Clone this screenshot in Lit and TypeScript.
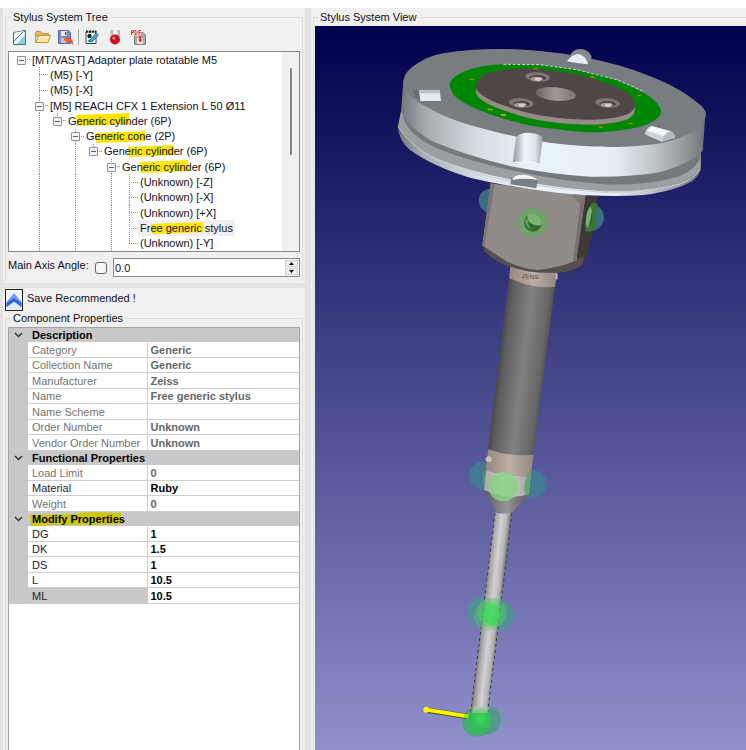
import { LitElement, html, svg, css, nothing } from "lit";
import { customElement, property } from "lit/decorators.js";
import { classMap } from "lit/directives/class-map.js";
import { styleMap } from "lit/directives/style-map.js";

type Point = [number, number];

/** Smooth path through a list of points. */
function curve(points: Point[], closed = true): string {
  const n = points.length;
  const at = (i: number): Point =>
    closed ? points[(i + n) % n] : points[Math.max(0, Math.min(n - 1, i))];
  let d = `M${points[0][0]} ${points[0][1]}`;
  const last = closed ? n : n - 1;
  for (let i = 0; i < last; i++) {
    const [p0, p1, p2, p3] = [at(i - 1), at(i), at(i + 1), at(i + 2)];
    const c1x = p1[0] + (p2[0] - p0[0]) / 6;
    const c1y = p1[1] + (p2[1] - p0[1]) / 6;
    const c2x = p2[0] - (p3[0] - p1[0]) / 6;
    const c2y = p2[1] - (p3[1] - p1[1]) / 6;
    d += `C${c1x} ${c1y} ${c2x} ${c2y} ${p2[0]} ${p2[1]}`;
  }
  return closed ? d + "Z" : d;
}

interface Marker { x: number; w: number; y0: number; y1: number }
interface Node {
  label: string;
  depth: number;
  /** Depths whose vertical guide runs through the whole row. */
  through: number[];
  open?: boolean;
  selected?: boolean;
  marker?: Marker;
}

const NODES: Node[] = [
  { label: "[MT/VAST] Adapter plate rotatable M5", depth: 0, through: [], open: true },
  { label: "(M5) [-Y]", depth: 1, through: [1] },
  { label: "(M5) [-X]", depth: 1, through: [1] },
  { label: "[M5] REACH CFX 1 Extension L 50 Ø11", depth: 1, through: [1], open: true },
  { label: "Generic cylinder (6P)", depth: 2, through: [1], open: true, marker: { x: 10, w: 54, y0: 0, y1: 12 } },
  { label: "Generic cone (2P)", depth: 3, through: [1, 3], open: true, marker: { x: 11, w: 51, y0: 2, y1: 13 } },
  { label: "Generic cylinder (6P)", depth: 4, through: [1, 3], open: true, marker: { x: 26, w: 47, y0: 1, y1: 12 } },
  { label: "Generic cylinder (6P)", depth: 5, through: [1, 3, 5], open: true, marker: { x: 20, w: 49, y0: 1, y1: 13 } },
  { label: "(Unknown) [-Z]", depth: 6, through: [1, 3, 5, 6] },
  { label: "(Unknown) [-X]", depth: 6, through: [1, 3, 5, 6] },
  { label: "(Unknown) [+X]", depth: 6, through: [1, 3, 5, 6] },
  { label: "Free generic stylus", depth: 6, through: [1, 3, 5, 6], selected: true, marker: { x: 13, w: 53, y0: 2, y1: 13 } },
  { label: "(Unknown) [-Y]", depth: 6, through: [1, 3, 5] },
];

interface Prop { name: string; value: string; editable?: boolean; current?: boolean }
interface Section { title: string; marked?: boolean; rows: Prop[] }

const SECTIONS: Section[] = [
  {
    title: "Description",
    rows: [
      { name: "Category", value: "Generic" },
      { name: "Collection Name", value: "Generic" },
      { name: "Manufacturer", value: "Zeiss" },
      { name: "Name", value: "Free generic stylus" },
      { name: "Name Scheme", value: "" },
      { name: "Order Number", value: "Unknown" },
      { name: "Vendor Order Number", value: "Unknown" },
    ],
  },
  {
    title: "Functional Properties",
    rows: [
      { name: "Load Limit", value: "0" },
      { name: "Material", value: "Ruby", editable: true },
      { name: "Weight", value: "0" },
    ],
  },
  {
    title: "Modify Properties",
    marked: true,
    rows: [
      { name: "DG", value: "1", editable: true },
      { name: "DK", value: "1.5", editable: true },
      { name: "DS", value: "1", editable: true },
      { name: "L", value: "10.5", editable: true },
      { name: "ML", value: "10.5", editable: true, current: true },
    ],
  },
];

const reset = css`
  * { box-sizing: border-box; }
  button { padding: 0; border: 0; background: none; font: inherit; color: inherit; display: block; }
  svg { display: block; }
`;

@customElement("tool-bar")
export class ToolBar extends LitElement {
  static styles = [reset, css`
    :host { display: flex; align-items: center; gap: 7px; height: 18px; }
    .rule { width: 1px; height: 16px; background: #a8a8a8; margin: 0 -2px 0 -3px; }
  `];

  private tool(name: string, art: unknown) {
    return html`<button type="button" title=${name} aria-label=${name}>
      <svg width="16" height="16" viewBox="0 0 16 16">${art}</svg>
    </button>`;
  }

  render() {
    return html`
      ${this.tool("New", svg`
        <path d="M1.5 3.5 13.5 1.5V15.5H1.5Z" fill="#e4f6fa" stroke="#3d7887"/>
        <path d="M2 4 11 2 3 11Z" fill="#f7feff"/>
        <path d="M5 15 13 6V15Z" fill="#8fd0e4"/>
        <path d="M2 12 11 3" stroke="#4b6f7d" fill="none"/>
        <path d="M10 1 14 1 14 4Z" fill="#3d8a7c"/>`)}
      ${this.tool("Open", svg`
        <path d="M.5 3.5 1.5 2.5H5.5L7 4.5H13.5V7H.5Z" fill="#e9b95a" stroke="#c48b2d"/>
        <path d="M.5 13V6M.5 13.5H13L15.5 6.5H4L1 13.5Z" fill="#fbe5a0" stroke="#c89334"/>
        <path d="M4.5 7.5H14L13.5 9H4Z" fill="#fff6d2"/>`)}
      ${this.tool("Save and revert", svg`
        <path d="M.5 1.5H10L12.5 3.5V14.5H.5Z" fill="#7d8abf" stroke="#5b669a"/>
        <path d="M3 2H9V7H3Z" fill="#e3e7f2"/><path d="M7 3H8.500V6H7Z" fill="#4a558a"/>
        <path d="M3 9H10V14H3Z" fill="#c3c9dc"/>
        <path d="M6 10.500 9.500 7V9.200C13 9 15.500 11 14.500 15.500C13.500 13 12 12 9.500 12.200V14Z" fill="#ff5a2a" stroke="#d83a12" stroke-width=".5"/>`)}
      <span class="rule"></span>
      ${this.tool("Edit", svg`
        <path d="M2 3H12V14.500H2Z" fill="#fbfbfb" stroke="#2c4a50"/>
        <path d="M2 2.500H12.500" stroke="#222" stroke-width="2" stroke-dasharray="2 1"/>
        <circle cx="5.500" cy="7" r="2.200" fill="#1a2c2c"/>
        <path d="M3.500 12.500C5 9 8 10 9 13Z" fill="#2b9b62"/>
        <path d="M6 11 12 4 14.500 6 8.500 12.500 5.500 13Z" fill="#4ca7df" stroke="#1c5c8c" stroke-width=".8"/>`)}
      ${this.tool("Stylus", svg`
        <path d="M4.500 1V8M11.500 1V8" stroke="#9a9a9a" stroke-width="2.400"/>
        <path d="M4 1V8M11 1V8" stroke="#e6e6e6"/>
        <circle cx="8" cy="10.500" r="5" fill="#c8101e"/>
        <circle cx="6.800" cy="9" r="1.600" fill="#ff7d80"/>`)}
      ${this.tool("PDF", svg`
        <path d="M4.500 3.500H13L15.500 6V15.500H4.500Z" fill="#a9a9a9" stroke="#858585"/>
        <path d="M0 .5H11V6.500H0Z" fill="#fff3f3"/>
        <path d="M1.500 6V1.500H3.500V3.500H1.500M5 1.500V5.500H6.500L7 4.500V2.500L6 1.500H5M9 6V1.500H11M9 3.500H10.500" fill="none" stroke="#e02020"/>
        <path d="M7 9H13V15H7Z" fill="#e8e8e8"/>
        <path d="M9.500 7H11V10.500H12.500L10.200 13.500 8 10.500H9.500Z" fill="#d61e1e"/>`)}
    `;
  }
}

@customElement("stylus-tree")
export class StylusTree extends LitElement {
  static styles = [reset, css`
    :host { display: flex; border: 1px solid #828790; background: #fff; height: 201px; }
    .rows { flex: 1; min-width: 0; display: grid; grid-auto-rows: 1fr; padding-left: 3px; overflow: hidden; }
    .row { display: flex; min-width: 0; white-space: nowrap; }
    .cell { width: 18px; flex: none; position: relative; background-repeat: no-repeat;
      --dots: repeating-linear-gradient(#8d8d8d 0 1px, transparent 1px 2px);
      --dash: repeating-linear-gradient(90deg, #8d8d8d 0 1px, transparent 1px 2px); }
    .full { background: var(--dots) 9px 0 / 1px 100% no-repeat; }
    .tee { background: var(--dots) 9px 0 / 1px 100% no-repeat, var(--dash) 9px 50% / 9px 1px no-repeat; }
    .end { background: var(--dots) 9px 0 / 1px 50% no-repeat, var(--dash) 9px 50% / 9px 1px no-repeat; }
    .root { background: var(--dash) 9px 50% / 9px 1px no-repeat; }
    .toggle { position: absolute; left: 5px; top: calc(50% - 4px); width: 9px; height: 9px; border: 1px solid #919191;
      border-radius: 1px; background: linear-gradient(#4b63a7, #4b63a7) center / 5px 1px no-repeat, #f3f3f3; }
    .label { position: relative; display: flex; align-items: center; padding: 0 2px; z-index: 0; }
    .selected { background: #f0f0f0; }
    .marker { position: absolute; top: 0; z-index: -1; overflow: visible; fill: #ffe600; }
    .scroll { width: 17px; background: #f0f0f0; display: flex; justify-content: center; }
    .thumb { width: 2px; height: 87px; margin-top: 16px; background: #858585; border-radius: 1px; }
  `];

  private cells(node: Node) {
    const out = [];
    for (let i = 0; i <= node.depth; i++) {
      const own = i === node.depth;
      const on = node.through.includes(i);
      out.push(html`<span class=${classMap({
        cell: true,
        root: own && i === 0,
        tee: own && on,
        end: own && !on && i > 0,
        full: !own && on,
      })}>${own && node.open
        ? html`<button class="toggle" type="button" aria-label=${"Collapse " + node.label}></button>`
        : nothing}</span>`);
    }
    return out;
  }

  private stroke(m: Marker) {
    return html`<svg class="marker" style=${styleMap({ left: m.x + "px" })} width=${m.w} height="15" aria-hidden="true">
      ${svg`<path d="M0 ${m.y0 + 2}L${m.w * 0.5} ${m.y0 + 1}L${m.w - 1} ${m.y0}L${m.w} ${m.y1 - 1}L${m.w * 0.6} ${m.y1}L1 ${m.y1 + 1}Z"/>`}
    </svg>`;
  }

  render() {
    return html`
      <div class="rows" role="tree" aria-label="Stylus System Tree">
        ${NODES.map((n) => html`
          <div class="row" role="treeitem" aria-level=${n.depth + 1}>
            ${this.cells(n)}
            <span class=${classMap({ label: true, selected: !!n.selected })}>
              ${n.marker ? this.stroke(n.marker) : nothing}${n.label}
            </span>
          </div>`)}
      </div>
      <div class="scroll"><span class="thumb"></span></div>
    `;
  }
}

@customElement("property-grid")
export class PropertyGrid extends LitElement {
  static styles = [reset, css`
    :host { display: block; border: 1px solid #a3a3a3; background: #fff; font: 11px/14px "Liberation Sans", Arial, sans-serif; }
    table { width: 100%; height: 276px; border-collapse: collapse; table-layout: fixed; }
    .gutter { width: 19px; }
    .names { width: 119px; }
    th, td { padding: 0; text-align: left; white-space: nowrap; overflow: hidden; }
    .chev-cell, .fill { background: #c8c8c8; }
    .title { background: #c8c8c8; font-weight: 700; padding-left: 4px; color: #000; }
    .titlebox { position: relative; z-index: 0; }
    .marker { position: absolute; left: -2px; top: -1px; z-index: -1; fill: #d0c800; overflow: visible; }
    .name { font-weight: 400; padding-left: 4px; color: #747474;
      border-bottom: 1px solid #cdcdcd; border-right: 1px solid #cdcdcd; }
    .value { font-weight: 700; padding-left: 3px; color: #666; border-bottom: 1px solid #cdcdcd; }
    .editable .name { color: #1c1c2c; }
    .editable .value { color: #000; }
    .current .name { background: #c8c8c8; }
    .chev { width: 19px; height: 14px; display: flex; align-items: center; justify-content: center; }
    .chev svg { fill: none; stroke: #333; stroke-width: 1.500; }
  `];

  render() {
    return html`
      <table aria-label="Component Properties">
        <colgroup><col class="gutter"><col class="names"><col></colgroup>
        ${SECTIONS.map((s) => html`
          <tbody>
            <tr>
              <td class="chev-cell"><button class="chev" type="button" aria-label=${"Collapse " + s.title}>
                <svg width="9" height="6" viewBox="0 0 9 6"><path d="M1 1 4.500 4.500 8 1"/></svg>
              </button></td>
              <th class="title" colspan="2" scope="rowgroup"><span class="titlebox">
                ${s.marked ? html`<svg class="marker" width="93" height="15" aria-hidden="true">
                  <path d="M0 3 40 2 62 0 91 1 93 12 60 13 20 13 1 15Z"/></svg>` : nothing}${s.title}
              </span></th>
            </tr>
            ${s.rows.map((r) => html`
              <tr class=${classMap({ editable: !!r.editable, current: !!r.current })}>
                <td class="fill"></td>
                <th class="name" scope="row">${r.name}</th>
                <td class="value">${r.value}</td>
              </tr>`)}
          </tbody>`)}
      </table>
    `;
  }
}

const PLATE_TOP: Point[] = [
  [40, 160], [52, 125], [100, 90], [160, 70], [250, 59], [350, 57], [450, 63], [560, 78], [700, 110], [830, 160],
  [915, 212], [946, 245], [938, 278], [900, 310], [820, 338], [700, 350], [600, 349], [480, 338], [360, 316], [200, 272], [100, 225], [50, 187],
];
const GREEN: Point[] = [
  [180, 170], [192, 143], [250, 115], [340, 103], [450, 105], [560, 120], [680, 150], [775, 197], [812, 238], [800, 266],
  [745, 291], [640, 306], [540, 302], [400, 282], [280, 245], [205, 207],
];
const CORE: Point[] = [
  [258, 172], [275, 140], [330, 121], [420, 116], [540, 130], [650, 160], [718, 193], [734, 225], [715, 251], [650, 266],
  [560, 268], [440, 254], [340, 226], [280, 198],
];
const CORE_SIDE: Point[] = CORE.map(([x, y]) => [x, y + 15]);
const SCREWS: Point[] = [[443, 141], [394, 219], [653, 219]];
const PADS: Point[] = [[246, 148], [437, 115], [608, 141], [747, 196], [722, 280], [633, 291], [340, 254], [300, 238]];

@customElement("stylus-view")
export class StylusView extends LitElement {
  static styles = [reset, css`
    :host { display: block; background: linear-gradient(#00004c, #9090cc); }
    svg { width: 100%; height: auto; }
    .mark { font: 14px "Liberation Sans", sans-serif; fill: #2e2a28; }
  `];

  render() {
    return html`<svg viewBox="315 26 431 724" role="img" aria-label="Stylus system model">${svg`
      <defs>
        <linearGradient id="rim"><stop offset="0" stop-color="#72777a"/><stop offset=".08" stop-color="#a5abaf"/><stop offset=".25" stop-color="#d6dde2"/><stop offset=".45" stop-color="#e9f3fa"/><stop offset=".7" stop-color="#e6eff5"/><stop offset=".82" stop-color="#c2c9cd"/><stop offset=".93" stop-color="#94999c"/><stop offset="1" stop-color="#6e7376"/></linearGradient>
        <linearGradient id="pin"><stop offset="0" stop-color="#8e9599"/><stop offset=".4" stop-color="#edf5fb"/><stop offset=".75" stop-color="#dde4ea"/><stop offset="1" stop-color="#9aa0a4"/></linearGradient>
        <linearGradient id="hole"><stop offset="0" stop-color="#6b6461"/><stop offset=".5" stop-color="#a09894"/><stop offset="1" stop-color="#7d7673"/></linearGradient>
        <linearGradient id="tube" gradientUnits="userSpaceOnUse" x1="497" y1="370" x2="547" y2="376"><stop offset="0" stop-color="#464646"/><stop offset=".12" stop-color="#5e5e5e"/><stop offset=".5" stop-color="#818181"/><stop offset=".85" stop-color="#666"/><stop offset="1" stop-color="#484848"/></linearGradient>
        <linearGradient id="collar"><stop offset="0" stop-color="#94877f"/><stop offset=".5" stop-color="#bdaea7"/><stop offset="1" stop-color="#93877f"/></linearGradient>
        <linearGradient id="ring"><stop offset="0" stop-color="#a9a9a9"/><stop offset=".5" stop-color="#d4d2d3"/><stop offset="1" stop-color="#a0a0a0"/></linearGradient>
        <linearGradient id="cone"><stop offset="0" stop-color="#5c5c5c"/><stop offset=".5" stop-color="#969492"/><stop offset="1" stop-color="#5a5a5a"/></linearGradient>
        <linearGradient id="stem" gradientUnits="userSpaceOnUse" x1="482" y1="612" x2="500" y2="614"><stop offset="0" stop-color="#777"/><stop offset=".2" stop-color="#a9a9a9"/><stop offset=".5" stop-color="#d2d2d2"/><stop offset=".8" stop-color="#b5b5b5"/><stop offset="1" stop-color="#757575"/></linearGradient>
        <radialGradient id="bright"><stop offset="0" stop-color="#2fe14e"/><stop offset="1" stop-color="#33b65a"/></radialGradient>
      </defs>

      <!-- cube below the plate -->
      <g transform="translate(460 170) scale(.33333)">
        <circle cx="92" cy="92" r="36" fill="#386d80"/>
        <circle cx="391" cy="142" r="41" fill="#386d80"/>
        <path d="M360 75 413 78 400 180 378 265Q368 288 340 298L300 307Z" fill="#3d3937"/>
        <path d="M68 226 74 244Q105 275 150 292Q230 315 310 307Q350 300 365 286L372 262 230 280Z" fill="#55504d"/>
        <path d="M92 40 67 226 138 273Q190 297 232 300Q300 294 349 271L376 78Z" fill="#928c89"/>
        <path d="M92 40 67 226 73 232 104 45Z" fill="#7a7572"/>
        <path d="M361 95 376 78 349 271 339 274Z" fill="#77716f"/>
        <path d="M330 75H378L361 100Z" fill="#7f7976"/>
        <path d="M397 98Q375 120 376 183Q395 190 405 177L412 100Z" fill="#3d7534"/>
        <ellipse cx="387" cy="142" rx="8" ry="31" transform="rotate(8 387 142)" fill="#78b16f"/>
        <path d="M391 114Q399 140 384 170Q394 164 397 140Z" fill="#24542a"/>
        <circle cx="218" cy="158" r="45" fill="#72a36c"/>
        <circle cx="219" cy="158" r="27" fill="#2e6a30"/>
        <path d="M202 134Q222 124 240 140Q248 152 244 165Q230 170 212 160Q200 150 202 134Z" fill="#7bb374"/>
        <path d="M194 150Q194 170 215 180Q203 165 202 143Z" fill="#5d9d58"/>
        <path d="M151 290Q215 312 291 308L285 352Q215 360 147 325Z" fill="url(#collar)"/>
        <path d="M290 310V328" stroke="#cfc8c3" stroke-width="5"/>
      </g>
      <text class="mark" transform="translate(522 278) scale(.4) rotate(4)">ZEISS</text>

      <!-- mounting plate -->
      <g transform="translate(390 30) scale(.33333)">
        <path d="M33 245 24 285Q24 330 60 360Q130 410 240 443Q360 472 500 488Q640 503 760 495Q860 482 908 452Q930 435 933 410V355Z" fill="url(#rim)"/>
        <path d="M33 245 26 285Q60 345 140 385Q240 425 360 448Q500 475 640 484Q780 486 870 458Q915 440 932 415V350Z" fill="#999fa2"/>
        <path d="M24 288Q60 350 140 389Q240 430 360 453Q500 479 640 487Q780 489 870 462Q915 444 931 418" fill="none" stroke="#c9cfd3" stroke-width="3"/>
        <path d="M38 260Q60 325 160 362Q260 400 380 424Q520 455 660 464Q790 464 870 438Q920 415 930 385L932 340 500 330Z" fill="#73797c"/>
        <path d="M40 155 33 245Q55 292 130 335Q240 380 370 410Q480 432 600 440Q710 442 800 428Q890 408 938 362L947 243Z" fill="url(#rim)"/>
        <path d=${curve(PLATE_TOP)} fill="#777d80"/>
        <path d=${curve(GREEN)} fill="#008605"/>
        <path d="M340 103 450 104 560 119 680 149 760 184" fill="none" stroke="#ccd3d5" stroke-width="3" stroke-dasharray="9 5"/>
        <path d=${curve(CORE_SIDE)} fill="#958c88"/>
        <path d=${curve(CORE)} fill="#4f4745"/>
        <ellipse cx="497" cy="192" rx="61" ry="20" transform="rotate(5 497 192)" fill="url(#hole)"/>
        ${SCREWS.map(([x, y]) => svg`
          <ellipse cx=${x} cy=${y} rx="37" ry="14" transform="rotate(5 ${x} ${y})" fill="#7f7875"/>
          <ellipse cx=${x} cy=${y + 3} rx="25" ry="9" fill="#4a4341"/>
          <ellipse cx=${x - 3} cy=${y + 6} rx="19" ry="7" fill="#a29b98"/>
          <path d="M${x - 8} ${y + 2}h18v7l-9 3-9-3Z" fill="#d5d0ce"/>`)}
        ${PADS.map(([x, y], i) => svg`
          <path d="M${x - 9} ${y - 2}h14l4 5h-14Z" fill=${i > 5 ? "#c9c900" : "#7a8a00"}/>
          <path d="M${x - 3} ${y - 1}h6v3h-6Z" fill="#b87a10"/>`)}
        <path d="M541 75Q550 57 570 57Q597 58 605 80L600 98 560 90Z" fill="#858b8f"/>
        <path d="M531 94Q545 72 567 72Q588 78 594 103Q560 100 531 94Z" fill="#e6eff6"/>
        <path d="M68 180 88 180 92 212Q72 200 68 180Z" fill="#686e71"/>
        <path d="M87 181H149L153 213H91Z" fill="#e3eaf0"/>
        <path d="M87 181H149L150 190H88Z" fill="#bac1c6"/>
        <path d="M764 313Q768 294 784 288L842 304Q855 312 855 322L815 335Z" fill="#cdd4d9"/>
        <path d="M784 288 842 304 822 318 772 302Z" fill="#f0f6fa"/>
        <path d="M815 335Q822 306 842 304Q855 310 855 324Z" fill="#b3babf"/>
        <path d="M378 325Q382 308 418 308Q455 311 458 325L448 405Q410 394 368 401Z" fill="url(#pin)"/>
        <path d="M368 401Q380 393 392 400Q420 390 448 404" fill="none" stroke="#f4faff" stroke-width="4"/>
        <path d="M361 463 364 445Q378 434 400 434Q432 436 443 450L439 475Z" fill="#787e82"/>
        <path d="M368 444Q378 434 400 434Q432 436 443 450Q405 442 368 450Z" fill="#eef5fb"/>
      </g>

      <!-- extension tube and stem -->
      <path d="M509 278Q530 289 555 287L533 455Q510 459 488 449Z" fill="url(#tube)"/>
      <g transform="translate(440 430) scale(.33333)">
        <circle cx="128" cy="137" r="42" fill="#3f7f90" opacity=".85"/>
        <circle cx="278" cy="163" r="42" fill="#3f7f90" opacity=".85"/>
        <path d="M145 58Q210 82 281 74L272 138Q200 142 137 121Z" fill="url(#collar)"/>
        <circle cx="146" cy="88" r="9" fill="#cbbfb8"/>
        <path d="M138 121Q200 142 272 138L267 193Q210 214 132 180Z" fill="url(#ring)"/>
        <path d="M132 180Q210 214 268 192L216 248Q190 254 167 244Z" fill="url(#cone)"/>
        <path d="M137 118Q122 142 132 180Z" fill="#4f9a5f"/>
        <path d="M272 120Q246 150 256 200L266 194Z" fill="#55a560" opacity=".8"/>
        <circle cx="190" cy="170" r="44" fill="#85d483" opacity=".8"/>
      </g>
      <g transform="translate(410 570) scale(.33333)">
        <circle cx="217" cy="125" r="44" fill="#4c9590" opacity=".8"/>
        <circle cx="270" cy="135" r="44" fill="#4c9590" opacity=".8"/>
        <circle cx="202" cy="455" r="45" fill="#43a56f" opacity=".9"/>
        <circle cx="230" cy="450" r="43" fill="#4d9b86" opacity=".85"/>
      </g>
      <path d="M495 512Q504 515 512 512L487 718Q479 726 470 718Z" fill="url(#stem)"/>
      <path d="M512 513 487 718M495 513 470 718" stroke="#3c3c50" stroke-width="1" stroke-dasharray="3 3" fill="none"/>
      <g transform="translate(410 570) scale(.33333)">
        <circle cx="236" cy="138" r="44" fill="#5fc573" opacity=".35"/>
        <circle cx="246" cy="128" r="44" fill="#48d05f" opacity=".5"/>
        <ellipse cx="244" cy="134" rx="26" ry="32" fill="#34e04e" opacity=".6"/>
        <circle cx="202" cy="457" r="40" fill="#38bd5c" opacity=".6"/>
        <circle cx="212" cy="450" r="33" fill="url(#bright)" opacity=".85"/>
        <path d="M190 410H238L232 428H186Z" fill="#9fcca0" opacity=".7"/>
        <path d="M48 420 172 440" stroke="#5a5a30" stroke-width="16"/>
        <path d="M48 419 174 439" stroke="#fff400" stroke-width="11"/>
        <circle cx="49" cy="419" r="9" fill="#fff400"/>
        <path d="M162 437 175 440" stroke="#8ee81c" stroke-width="11"/>
      </g>`}
    </svg>`;
  }
}

@customElement("app-root")
export class AppRoot extends LitElement {
  @property() angle = "0.0";

  static styles = [reset, css`
    :host { display: flex; flex-direction: column; min-height: 100vh; box-sizing: border-box; padding-top: 8px;
      background: linear-gradient(#fff 0 8px, #e3e3e3 8px);
      font: 11px/14px "Liberation Sans", Arial, sans-serif; color: #101020; }
    .main { flex: 1; display: flex; gap: 6px; padding-left: 3px; }
    .side { flex: none; width: 302px; display: flex; flex-direction: column; gap: 5px; }
    .panel { background: #f0f0f0; padding: 2px; }
    .lower, .view { display: flex; flex-direction: column; flex: 1; min-width: 0; }
    .view { padding-bottom: 0; padding-right: 0; }
    fieldset { border: 1px solid #dcdcdc; border-bottom: 0; margin: 0; padding: 0 2px; min-width: 0; }
    legend { padding: 0 2px; margin-left: 3px; }
    tool-bar { padding: 0 4px; margin: 4px 0 5px; }
    .axis { display: flex; align-items: flex-start; padding: 6px 0 4px; white-space: nowrap; }
    .axis label { flex: none; width: 87px; }
    .axis input[type="checkbox"] { appearance: none; width: 12px; height: 12px; margin: 4px 6px 0 0; border: 1px solid #666; border-radius: 3px; background: #f6f6f6; }
    .spin { flex: 1; display: flex; height: 19px; border: 1px solid #828790; background: #fff; min-width: 0; }
    .spin input { flex: 1; min-width: 0; border: 0; padding: 0 1px; background: none; font: inherit; color: inherit; }
    .arrows { width: 14px; display: grid; gap: 1px; padding: 1px 1px 1px 0; }
    .arrows button { background: #f0f0f0; border: 1px solid #d0d0d0; display: flex; align-items: center; justify-content: center; }
    .notice { display: flex; gap: 4px; height: 22px; }
    .lower { padding-top: 1px; padding-bottom: 0; }
    .up { width: 18px; border: 1px solid #222; background: #f4f4f4; }
    .notice span { padding-top: 2px; }
    .props { flex: 1; display: flex; flex-direction: column; }
    property-grid { flex: 1; margin-top: 2px; border-bottom: 0; }
    .view fieldset { flex: 1; padding: 0 0 0 1px; border-right: 0; }
    .view legend { margin-left: 3px; }
    stylus-view { margin-top: 2px; }
  `];

  render() {
    return html`
      <div class="main">
        <div class="side">
          <section class="panel">
            <fieldset>
              <legend>Stylus System Tree</legend>
              <tool-bar></tool-bar>
              <stylus-tree></stylus-tree>
              <div class="axis">
                <label for="angle">Main Axis Angle:</label>
                <input type="checkbox" aria-label="Use main axis angle">
                <div class="spin">
                  <input id="angle" type="text" .value=${this.angle}>
                  <div class="arrows">
                    <button type="button" aria-label="Increase"><svg width="5" height="3" viewBox="0 0 5 3"><path d="M0 3 2.500 0 5 3Z"/></svg></button>
                    <button type="button" aria-label="Decrease"><svg width="5" height="3" viewBox="0 0 5 3"><path d="M0 0 2.500 3 5 0Z"/></svg></button>
                  </div>
                </div>
              </div>
            </fieldset>
          </section>
          <section class="panel lower">
            <div class="notice">
              <button class="up" type="button" aria-label="Collapse panel">
                <svg width="16" height="20" viewBox="0 0 16 20">
                  <path d="M8 10 15.500 17V19.500H.5V17Z" fill="#e2e9f7"/>
                  <path d="M8 3 15.500 12V17L8 11.500 .5 17V12Z" fill="#6a9dff"/>
                  <path d="M.5 13 8 8 15.500 13V17L8 11.500 .5 17Z" fill="#2f62e0"/>
                </svg>
              </button>
              <span>Save Recommended !</span>
            </div>
            <fieldset class="props">
              <legend>Component Properties</legend>
              <property-grid></property-grid>
            </fieldset>
          </section>
        </div>
        <section class="panel view">
          <fieldset>
            <legend>Stylus System View</legend>
            <stylus-view></stylus-view>
          </fieldset>
        </section>
      </div>
    `;
  }
}
